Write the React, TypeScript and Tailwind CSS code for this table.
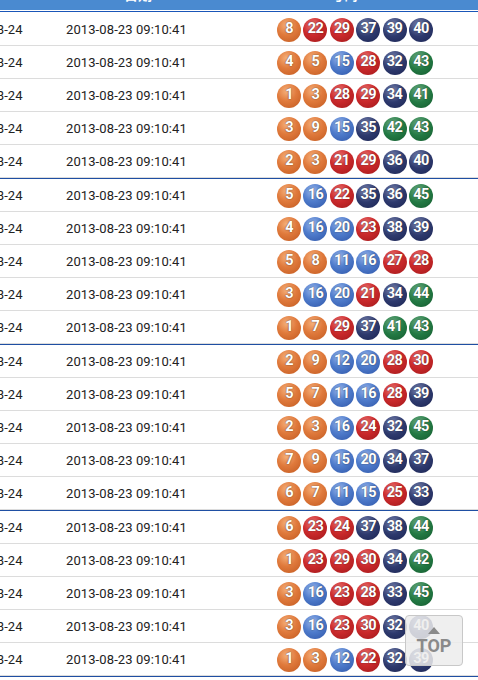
import React from "react";

const rows: number[][] = [
  [8, 22, 29, 37, 39, 40],
  [4, 5, 15, 28, 32, 43],
  [1, 3, 28, 29, 34, 41],
  [3, 9, 15, 35, 42, 43],
  [2, 3, 21, 29, 36, 40],
  [5, 16, 22, 35, 36, 45],
  [4, 16, 20, 23, 38, 39],
  [5, 8, 11, 16, 27, 28],
  [3, 16, 20, 21, 34, 44],
  [1, 7, 29, 37, 41, 43],
  [2, 9, 12, 20, 28, 30],
  [5, 7, 11, 16, 28, 39],
  [2, 3, 16, 24, 32, 45],
  [7, 9, 15, 20, 34, 37],
  [6, 7, 11, 15, 25, 33],
  [6, 23, 24, 37, 38, 44],
  [1, 23, 29, 30, 34, 42],
  [3, 16, 23, 28, 33, 45],
  [3, 16, 23, 30, 32, 40],
  [1, 3, 12, 22, 32, 39],
];

function ballClass(n: number): string {
  if (n <= 10)
    return "bg-[radial-gradient(circle_at_40%_30%,#f6b07a_0%,#e07a3c_45%,#c25a20_100%)]";
  if (n <= 20)
    return "bg-[radial-gradient(circle_at_40%_30%,#9bb8ec_0%,#4f7ccc_45%,#2f56a8_100%)]";
  if (n <= 30)
    return "bg-[radial-gradient(circle_at_40%_30%,#ee7a78_0%,#cc2a2c_45%,#a0181a_100%)]";
  if (n <= 40)
    return "bg-[radial-gradient(circle_at_40%_30%,#7d88b4_0%,#2e3a6e_50%,#1b2452_100%)]";
  return "bg-[radial-gradient(circle_at_40%_30%,#6fae84_0%,#237a44_50%,#155a2e_100%)]";
}

function Ball({ n }: { n: number }) {
  return (
    <span
      className={`flex h-[24px] w-[24px] items-center justify-center rounded-full text-[14.5px] font-bold leading-none tracking-[-0.6px] text-white [text-shadow:0_0_1.5px_rgba(0,0,0,0.7)] ${ballClass(
        n
      )}`}
    >
      {n}
    </span>
  );
}

export default function App() {
  return (
    <div
      className="relative h-[680px] w-[478px] overflow-hidden bg-white"
      style={{ fontFamily: "Roboto, 'Noto Sans CJK SC', sans-serif" }}
    >
      {/* header */}
      <div className="relative h-[10px] overflow-hidden bg-[#4a8ad0]">
        <span className="absolute left-[124px] top-[-12px] text-[14px] font-bold leading-[14px] text-white">
          日期
        </span>
        <span className="absolute left-[330px] top-[-12px] text-[14px] font-bold leading-[14px] text-white">
          号码
        </span>
      </div>
      <div className="h-[1px] bg-white" />
      <div className="h-[1px] bg-[#1a56b8]" />
      <div className="h-[1px] bg-white" />

      <div className="ml-[-44px]">
        {rows.map((r, i) => (
          <React.Fragment key={i}>
            <div className="flex h-[33px] items-center border-b border-[#dcdcdc] pt-[1px] text-[13px] tracking-[0.1px] text-[#222]">
              <div className="w-[110px] shrink-0">2013-08-24</div>
              <div className="w-[211px] shrink-0">2013-08-23 09:10:41</div>
              <div className="flex gap-[2.4px]">
                {r.map((n, j) => (
                  <Ball key={j} n={n} />
                ))}
              </div>
            </div>
            {i % 5 === 4 && <div className="h-[1px] bg-[#1f4fa3]" />}
          </React.Fragment>
        ))}
      </div>

      {/* TOP button */}
      <div className="absolute left-[405px] top-[615px] flex h-[51px] w-[58px] flex-col items-center rounded-[4px] border border-[#c8c8c8] bg-[rgba(236,236,236,0.85)]">
        <div className="mt-[11px] h-0 w-0 border-x-[6px] border-b-[7px] border-x-transparent border-b-[#8a8a8a]" />
        <div className="mt-[3px] text-[18px] font-bold leading-[18px] text-[#8a8a8a]">TOP</div>
      </div>
    </div>
  );
}
